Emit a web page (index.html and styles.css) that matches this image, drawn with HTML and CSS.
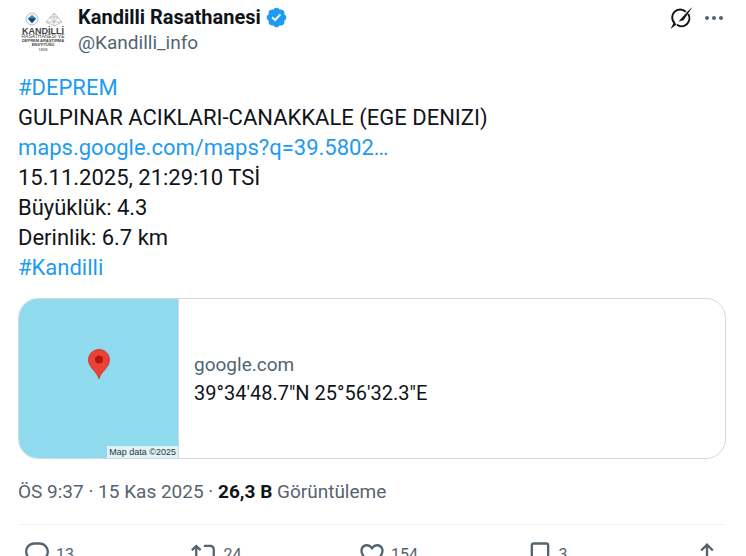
FILE: index.html
```html
<!DOCTYPE html>
<html lang="tr">
<head>
  <meta charset="UTF-8">
  <meta name="viewport" content="width=device-width, initial-scale=1">
  <title>Kandilli Rasathanesi</title>
  <link rel="stylesheet" href="styles.css">
</head>
<body>
  <article class="post">
    <!-- header -->
    <header class="post-header">
      <a class="avatar" href="#" aria-label="Kandilli Rasathanesi">
        <svg viewBox="0 0 50 50" width="50" height="50">
          <circle cx="14" cy="14" r="6" fill="#eef2f5" stroke="#b9c4cc" stroke-width="1"/>
          <path d="M14 10l4 3.500-4 4.500-4-4.500z" fill="#2b86cc"/>
          <path d="M10 13.500h8l-4 4.500z" fill="#12406e"/>
          <g fill="none" stroke="#b0b0b0" stroke-width=".8">
            <path d="M36 8l-8 9h16zM36 8v13M32 12h8M28 17l8 4 8-4M32 12l4 5 4-5"/>
          </g>
          <g font-family="Liberation Sans, sans-serif" text-anchor="middle" fill="#444">
            <text x="25" y="29" font-size="9" font-weight="bold">KANDİLLİ</text>
            <text x="25" y="33" font-size="5">RASATHANESİ VE</text>
            <text x="25" y="37" font-size="4" font-weight="bold">DEPREM ARAŞTIRMA</text>
            <text x="25" y="41" font-size="4" font-weight="bold">ENSTİTÜSÜ</text>
            <text x="25" y="46" font-size="4">1868</text>
          </g>
        </svg>
      </a>
      <div class="author">
        <div class="author-name">
          <a href="#">Kandilli Rasathanesi</a>
          <svg class="badge" viewBox="0 0 22 22" aria-hidden="true"><path d="M20.396 11c-.018-.646-.215-1.275-.57-1.816-.354-.54-.852-.972-1.438-1.246.223-.607.27-1.264.14-1.897-.131-.634-.437-1.218-.882-1.687-.47-.445-1.053-.75-1.687-.882-.633-.13-1.29-.083-1.897.14-.273-.587-.704-1.086-1.245-1.44S11.647 1.62 11 1.604c-.646.017-1.273.213-1.813.568s-.969.854-1.24 1.44c-.608-.223-1.267-.272-1.902-.14-.635.13-1.22.436-1.69.882-.445.47-.749 1.055-.878 1.688-.13.633-.08 1.29.144 1.896-.587.274-1.087.705-1.443 1.245-.356.54-.555 1.17-.574 1.817.02.647.218 1.276.574 1.817.356.54.856.972 1.443 1.245-.224.606-.274 1.263-.144 1.896.13.634.433 1.218.877 1.688.47.443 1.054.747 1.687.878.633.132 1.29.084 1.897-.136.274.586.705 1.084 1.246 1.439.54.354 1.17.551 1.816.569.647-.016 1.276-.213 1.817-.567s.972-.854 1.245-1.44c.604.239 1.266.296 1.903.164.636-.132 1.22-.447 1.68-.907.46-.46.776-1.044.908-1.681s.075-1.299-.165-1.903c.586-.274 1.084-.705 1.439-1.246.354-.54.551-1.17.569-1.816zM9.662 14.85l-3.429-3.428 1.293-1.302 2.072 2.072 4.4-4.794 1.347 1.246z"/></svg>
        </div>
        <a class="handle" href="#">@Kandilli_info</a>
      </div>
      <div class="header-actions">
        <button class="icon-btn grok" type="button" aria-label="Grok">
          <svg viewBox="0 0 24 24">
            <path class="ring" d="M5.600 17.200A8 8 0 0 1 16.800 5.700M19.200 8A8 8 0 0 1 8 18.900"/>
            <path d="M23.500 1L14.500 14.200 9.500 15.500 18.500 5.500zM1.500 23L5 16.200 7.800 18.200z"/>
          </svg>
        </button>
        <button class="icon-btn more" type="button" aria-label="Daha fazla">
          <svg viewBox="0 0 24 24"><path d="M3 12c0-1.100.900-2 2-2s2 .900 2 2-.900 2-2 2-2-.900-2-2zm9 2c1.100 0 2-.900 2-2s-.900-2-2-2-2 .900-2 2 .900 2 2 2zm7 0c1.100 0 2-.900 2-2s-.900-2-2-2-2 .900-2 2 .900 2 2 2z"/></svg>
        </button>
      </div>
    </header>

    <!-- text -->
    <div class="post-text">
      <a href="#">#DEPREM</a><br>
      GULPINAR ACIKLARI-CANAKKALE (EGE DENIZI)<br>
      <a href="#">maps.google.com/maps?q=39.5802…</a><br>
      15.11.2025, 21:29:10 TSİ<br>
      Büyüklük: 4.3<br>
      Derinlik: 6.7 km<br>
      <a href="#">#Kandilli</a>
    </div>

    <!-- link card -->
    <a class="card" href="#">
      <div class="card-map">
        <svg class="pin" viewBox="0 0 22 30" aria-hidden="true">
          <path d="M11 .500C5.200.500.500 5 .500 10.800c0 3.800 2 6.700 4.300 9.500 2.600 3.100 5.100 5.400 6.200 9.400 1.100-4 3.600-6.300 6.200-9.400 2.300-2.800 4.300-5.700 4.300-9.500C21.500 5 16.800.500 11 .500z" fill="#ea4335" stroke="#c5352b" stroke-width=".8"/>
          <circle cx="11" cy="10.500" r="4" fill="#b31412"/>
        </svg>
        <span class="map-credit">Map data ©2025</span>
      </div>
      <div class="card-body">
        <span class="card-domain">google.com</span>
        <span class="card-title">39°34'48.7"N 25°56'32.3"E</span>
      </div>
    </a>

    <div class="meta">ÖS 9:37 · 15 Kas 2025 · <strong>26,3 B</strong> Görüntüleme</div>

    <!-- actions -->
    <div class="actions">
      <button class="action" type="button" aria-label="13 Yanıt">
        <svg viewBox="0 0 24 24"><path d="M1.751 10c0-4.420 3.584-8 8.005-8h4.366c4.490 0 8.129 3.640 8.129 8.130 0 2.960-1.607 5.680-4.196 7.110l-8.054 4.460v-3.690h-.067c-4.490.100-8.183-3.510-8.183-8.010zm8.005-6c-3.317 0-6.005 2.690-6.005 6 0 3.370 2.770 6.080 6.138 6.010l.351-.010h1.761v2.300l5.087-2.810c1.951-1.080 3.163-3.130 3.163-5.360 0-3.390-2.744-6.130-6.129-6.130H9.756z"/></svg>
        <span>13</span>
      </button>
      <button class="action" type="button" aria-label="24 Yeniden gönderi">
        <svg viewBox="0 0 24 24"><path d="M4.500 3.880l4.432 4.140-1.364 1.460L5.500 7.550V16c0 1.100.896 2 2 2H13v2H7.500c-2.209 0-4-1.790-4-4V7.550L1.432 9.480.068 8.020 4.500 3.880zM16.500 6H11V4h5.500c2.209 0 4 1.790 4 4v8.450l2.068-1.930 1.364 1.460-4.432 4.140-4.432-4.140 1.364-1.460 2.068 1.930V8c0-1.100-.896-2-2-2z"/></svg>
        <span>24</span>
      </button>
      <button class="action" type="button" aria-label="154 Beğeni">
        <svg viewBox="0 0 24 24"><path d="M16.697 5.500c-1.222-.060-2.679.510-3.890 2.160l-.805 1.090-.806-1.090C9.984 6.010 8.526 5.440 7.304 5.500c-1.243.070-2.349.780-2.910 1.910-.552 1.120-.633 2.780.479 4.820 1.074 1.970 3.257 4.270 7.129 6.610 3.870-2.340 6.052-4.640 7.126-6.610 1.111-2.040 1.030-3.700.477-4.820-.561-1.130-1.666-1.840-2.908-1.910zm4.187 7.690c-1.351 2.480-4.001 5.120-8.379 7.670l-.503.300-.504-.300c-4.379-2.550-7.029-5.190-8.382-7.670-1.360-2.500-1.410-4.860-.514-6.670.887-1.790 2.647-2.910 4.601-3.010 1.651-.090 3.368.560 4.798 2.010 1.429-1.450 3.146-2.100 4.796-2.010 1.954.100 3.714 1.220 4.601 3.010.896 1.810.846 4.170-.514 6.670z"/></svg>
        <span>154</span>
      </button>
      <button class="action" type="button" aria-label="3 Yer işareti">
        <svg viewBox="0 0 24 24"><path d="M4 4.500C4 3.120 5.119 2 6.500 2h11C18.881 2 20 3.120 20 4.500v18.440l-8-5.710-8 5.710V4.500zM6.500 4c-.276 0-.5.220-.5.500v14.560l6-4.290 6 4.290V4.500c0-.280-.224-.500-.5-.500h-11z"/></svg>
        <span>3</span>
      </button>
      <button class="action" type="button" aria-label="Paylaş">
        <svg viewBox="0 0 24 24"><path d="M12 2.590l5.700 5.700-1.410 1.420L13 6.410V16h-2V6.410l-3.300 3.300-1.410-1.420L12 2.590zM21 15l-.020 3.510c0 1.380-1.120 2.490-2.500 2.490H5.500C4.110 21 3 19.880 3 18.500V15h2v3.500c0 .280.220.500.500.500h12.980c.280 0 .500-.220.500-.500L19 15h2z"/></svg>
      </button>
    </div>
  </article>
</body>
</html>
```
FILE: styles.css
```css
:root {
  --color-text: #0f1419;
  --color-gray: #536471;
  --color-blue: #1d9bf0;
  --color-border: #cfd9de;
  --font-base: Roboto, "Liberation Sans", sans-serif;
}
*, *::before, *::after { box-sizing: border-box; }
body {
  margin: 0;
  height: 100vh;
  overflow: hidden;
  background: #fff;
  color: var(--color-text);
  font-family: var(--font-base);
  font-size: 19px;
}
a { color: inherit; text-decoration: none; }
button {
  padding: 0;
  border: none;
  background: none;
  font: inherit;
  color: inherit;
  cursor: pointer;
}
svg { display: block; fill: currentColor; }

.post { padding: 5px 20px 0 18px; }

/* header */
.post-header { display: flex; gap: 10px; }
.avatar {
  width: 50px;
  height: 50px;
  border-radius: 50%;
  overflow: hidden;
}
.author { flex: 1; line-height: 25px; }
.author-name {
  display: flex;
  align-items: center;
  gap: 4px;
  font-size: 20px;
  font-weight: 700;
}
.badge { width: 23px; height: 23px; fill: var(--color-blue); }
.handle { color: var(--color-gray); }
.header-actions {
  display: flex;
  align-items: center;
  gap: 9px;
  height: 25px;
}
.icon-btn svg { width: 24px; height: 24px; }
.grok .ring { fill: none; stroke: currentColor; stroke-width: 2; }
.more { color: var(--color-gray); }

/* text */
.post-text {
  margin-top: 18px;
  font-size: 22px;
  line-height: 30px;
}
.post-text a { color: var(--color-blue); }

/* link card */
.card {
  display: flex;
  margin-top: 15px;
  border: 1px solid var(--color-border);
  border-radius: 20px;
  overflow: hidden;
}
.card-map {
  position: relative;
  display: flex;
  align-items: center;
  justify-content: center;
  width: 160px;
  height: 159px;
  padding-bottom: 30px;
  border-right: 1px solid var(--color-border);
  background: #90daee;
}
.pin { width: 22px; height: 30px; }
.map-credit {
  position: absolute;
  right: 0;
  bottom: 0;
  padding: 0 2px;
  background: rgba(255,255,255,0.7);
  color: #333;
  font-family: "Liberation Sans", sans-serif;
  font-size: 9px;
  line-height: 12px;
}
.card-body {
  display: flex;
  flex: 1;
  flex-direction: column;
  justify-content: center;
  padding: 0 15px;
  line-height: 28px;
}
.card-domain { color: var(--color-gray); }
.card-title { font-size: 20px; }

.meta {
  margin-top: 20px;
  padding-bottom: 20px;
  border-bottom: 1px solid #eff3f4;
  color: var(--color-gray);
  line-height: 25px;
}
.meta strong { color: var(--color-text); }

/* actions */
.actions {
  display: grid;
  grid-template-columns: repeat(4, 1fr) 28px;
  padding: 15px 5px;
  color: var(--color-gray);
}
.action {
  display: flex;
  align-items: center;
  gap: 5px;
  font-size: 16px;
}
.action svg { width: 28px; height: 28px; }
```
